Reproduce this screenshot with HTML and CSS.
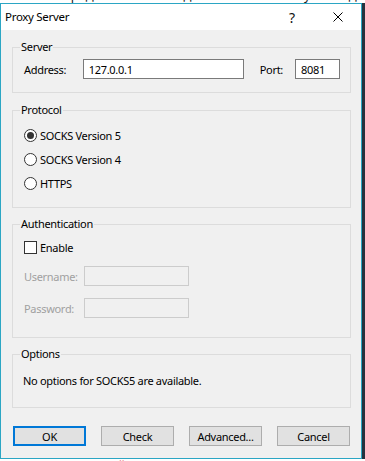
FILE: index.html
```html
<!DOCTYPE html>
<html lang="en">
<head>
  <meta charset="UTF-8" />
  <title>Proxy Server</title>
  <link rel="stylesheet" href="styles.css">
</head>
<body>
  <div class="desk">
    <div class="bg-top"><span>…емый посредством SSH-соединения и используемый для шифрования</span></div>
    <div class="desk-row">
      <div class="window">
        <div class="titlebar">
          <span class="title">Proxy Server</span>
          <span class="help">?</span>
          <span class="close">
            <svg width="10" height="10" viewBox="0 0 10 10"><path d="M0.5 0.5 L9.5 9.5 M9.5 0.5 L0.5 9.5" stroke="#000" stroke-width="1" fill="none"/></svg>
          </span>
        </div>

        <div class="dialog">
          <fieldset class="group group-server">
            <legend>Server</legend>
            <div class="server-row">
              <label class="lbl lbl-address">Address:</label>
              <input class="field field-address" value="127.0.0.1">
              <label class="lbl lbl-port">Port:</label>
              <input class="field field-port" value="8081">
            </div>
          </fieldset>

          <fieldset class="group group-protocol">
            <legend>Protocol</legend>
            <div class="choice"><span class="radio checked"></span><span>SOCKS Version 5</span></div>
            <div class="choice"><span class="radio"></span><span>SOCKS Version 4</span></div>
            <div class="choice"><span class="radio"></span><span>HTTPS</span></div>
          </fieldset>

          <fieldset class="group group-auth">
            <legend>Authentication</legend>
            <div class="choice"><span class="checkbox"></span><span>Enable</span></div>
            <div class="auth-row auth-user">
              <label class="lbl lbl-off">Username:</label>
              <input class="field field-off" disabled>
            </div>
            <div class="auth-row auth-pass">
              <label class="lbl lbl-off">Password:</label>
              <input class="field field-off" disabled>
            </div>
          </fieldset>

          <fieldset class="group group-options">
            <legend>Options</legend>
            <p class="note">No options for SOCKS5 are available.</p>
          </fieldset>

          <div class="buttons">
            <button class="btn btn-default">OK</button>
            <button class="btn">Check</button>
            <button class="btn">Advanced...</button>
            <button class="btn">Cancel</button>
          </div>
        </div>
      </div>
      <div class="bg-side"></div>
    </div>
    <div class="bg-bottom"><span>— это защищенный протокол поверх сетевого соединения</span></div>
  </div>
</body>
</html>
```

FILE: styles.css
```css
body {
  margin: 0;
  font-family: 'Noto Sans', 'Open Sans', sans-serif;
  font-size: 11px;
  letter-spacing: -0.3px;
  color: #000;
  background: #ffffff;
}

.desk {
  width: 365px;
  height: 461px;
  overflow: hidden;
}

.bg-top {
  height: 3px;
  overflow: hidden;
  white-space: nowrap;
  font-size: 13px;
  letter-spacing: 0;
  color: #1e1e1e;
}

.bg-top span {
  display: block;
  line-height: 16px;
  margin-top: -13px;
}

.desk-row {
  display: flex;
}

.bg-side {
  width: 3px;
  background: #26323e;
}

.bg-bottom {
  height: 3px;
  overflow: hidden;
  white-space: nowrap;
  font-size: 13px;
  letter-spacing: 0;
  color: #d32020;
}

.bg-bottom span {
  display: block;
  line-height: 16px;
  margin-top: -2px;
}

.window {
  width: 360px;
  border: 1px solid #2ba6c4;
  background: #f0f0f0;
}

.titlebar {
  height: 26px;
  background: #ffffff;
  display: flex;
  align-items: center;
}

.title {
  flex: 1;
  padding-left: 4px;
  font-size: 11.5px;
  padding-bottom: 1px;
}

.help {
  width: 46px;
  font-size: 14px;
  text-align: center;
  margin-left: 3px;
  color: #111;
}

.close {
  width: 46px;
  display: flex;
  justify-content: center;
}

.dialog {
  padding: 10px 10px 12px 11px;
}

.group {
  margin: 0;
  padding: 0 10px 0 11px;
  border: 1px solid #dcdcdc;
  min-width: 0;
}

.group legend {
  margin-left: -4px;
  padding: 0 1px;
  line-height: 14px;
}

.group + .group {
  margin-top: 9px;
}

.group-protocol {
  margin-top: 10px !important;
}

.server-row {
  display: flex;
  align-items: center;
  margin-top: 5px;
  padding-bottom: 13px;
}

.lbl {
  display: block;
  white-space: nowrap;
}

.lbl-address {
  width: 60px;
}

.lbl-port {
  width: 36px;
  margin-left: 16px;
}

.field {
  box-sizing: border-box;
  height: 20px;
  margin: 0;
  padding: 0 5px;
  border: 1px solid #7a7a7a;
  background: #ffffff;
  font-family: inherit;
  font-size: 11px;
  letter-spacing: -0.3px;
  color: #000;
  outline: none;
}

.field-address {
  width: 161px;
}

.field-port {
  width: 45px;
}

.group-protocol .choice:first-of-type {
  margin-top: 6px;
}

.group-protocol {
  padding-bottom: 12px;
}

.choice {
  display: flex;
  align-items: center;
  height: 24px;
  gap: 3px;
}

.radio {
  box-sizing: border-box;
  width: 13px;
  height: 13px;
  border: 1px solid #333;
  border-radius: 50%;
  background: #fff;
  display: flex;
  align-items: center;
  justify-content: center;
}

.radio.checked::after {
  content: "";
  width: 7px;
  height: 7px;
  border-radius: 50%;
  background: #333;
}

.checkbox {
  box-sizing: border-box;
  width: 13px;
  height: 13px;
  border: 1px solid #333;
  background: #fff;
}

.group-auth .choice {
  margin-top: 4px;
}

.group-auth {
  padding-bottom: 19px;
}

.auth-row {
  display: flex;
  align-items: center;
}

.auth-user {
  margin-top: 7px;
}

.auth-pass {
  margin-top: 12px;
}

.lbl-off {
  width: 60px;
  color: #a0a0a0;
}

.field-off {
  width: 105px;
  border-color: #cccccc;
  background: #f0f0f0;
}

.note {
  margin: 12px 0 0 -1px;
  line-height: 16px;
  padding-bottom: 18px;
}

.buttons {
  display: flex;
  justify-content: space-between;
  margin: 18px 1px 0 1px;
}

.btn {
  box-sizing: border-box;
  width: 73px;
  height: 20px;
  margin: 0;
  padding: 0;
  border: 1px solid #adadad;
  background: #e1e1e1;
  font-family: inherit;
  font-size: 11px;
  letter-spacing: -0.3px;
  color: #000;
}

.btn-default {
  border: 2px solid #0078d7;
}
```
